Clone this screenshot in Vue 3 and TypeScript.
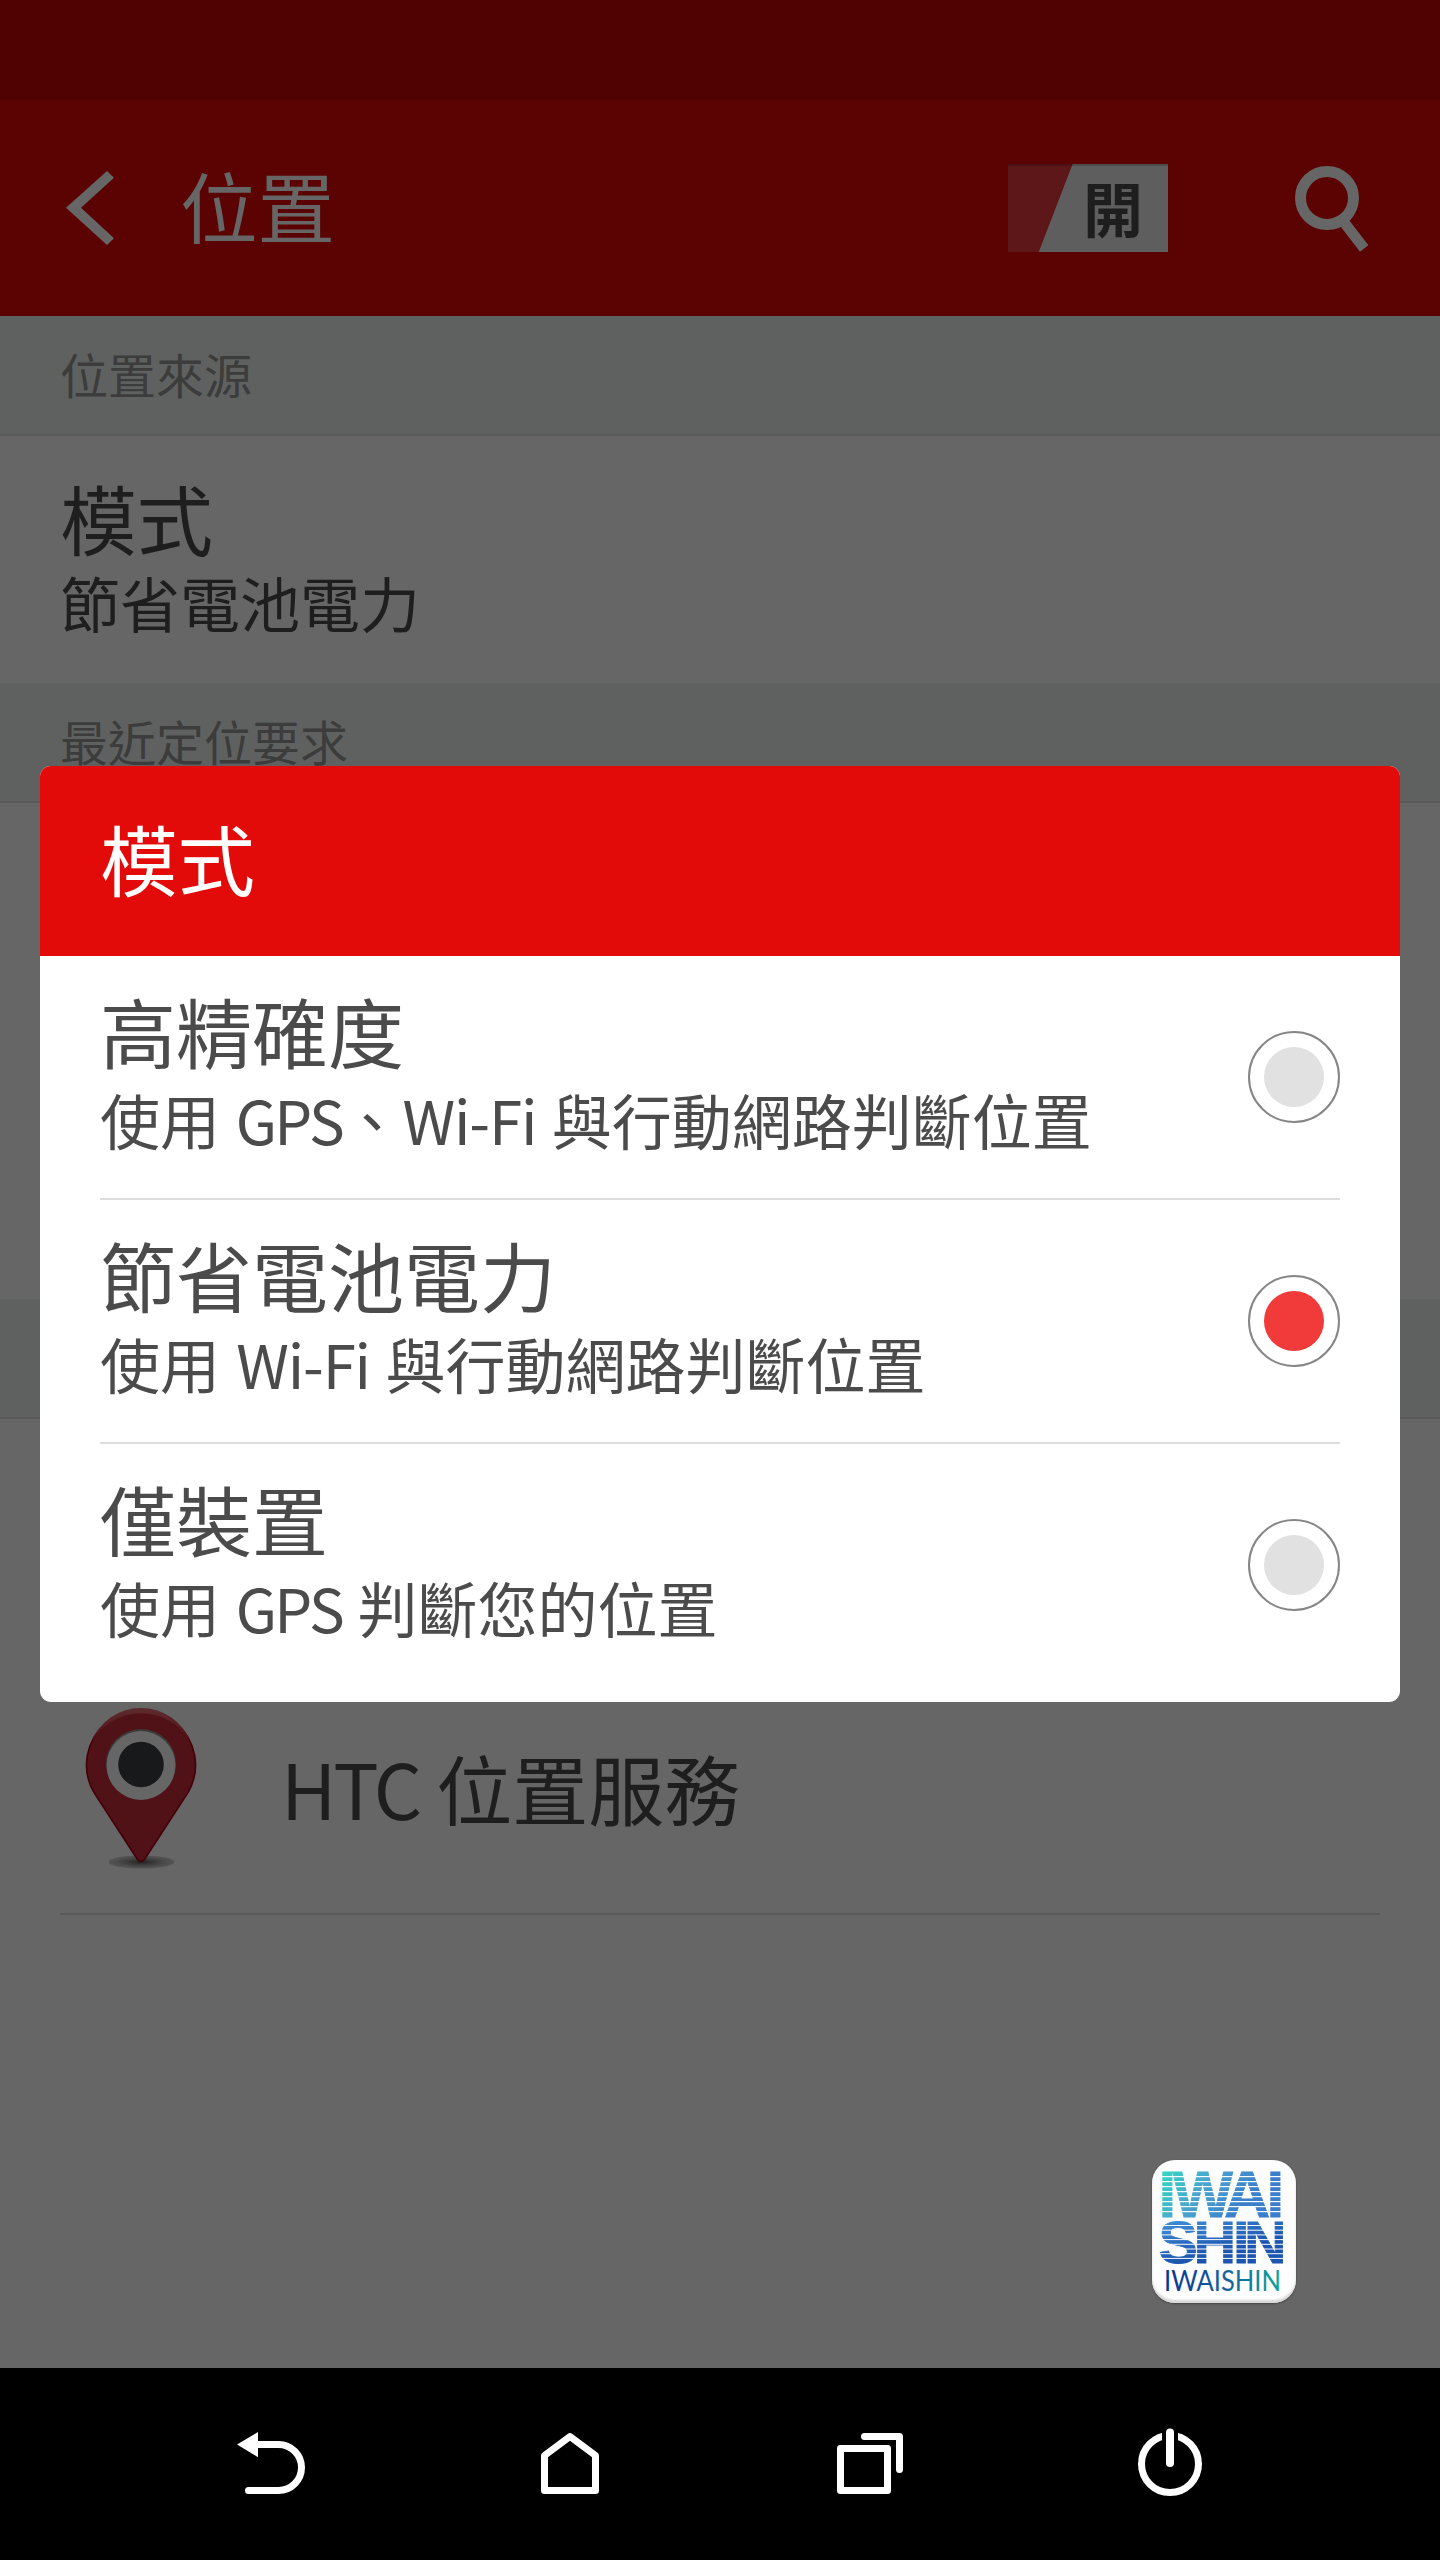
<script setup lang="ts">
import { ref } from 'vue'

interface Part {
  text: string
  kind?: 'gps' | 'wifi'
}

interface Mode {
  id: string
  title: string
  summary: Part[]
}

const modes: Mode[] = [
  {
    id: 'high',
    title: '高精確度',
    summary: [
      { text: '使用 ' },
      { text: 'GPS', kind: 'gps' },
      { text: '、' },
      { text: 'Wi-Fi', kind: 'wifi' },
      { text: ' 與行動網路判斷位置' },
    ],
  },
  {
    id: 'saving',
    title: '節省電池電力',
    summary: [
      { text: '使用 ' },
      { text: 'Wi-Fi', kind: 'wifi' },
      { text: ' 與行動網路判斷位置' },
    ],
  },
  {
    id: 'device',
    title: '僅裝置',
    summary: [
      { text: '使用 ' },
      { text: 'GPS', kind: 'gps' },
      { text: ' 判斷您的位置' },
    ],
  },
]

const selected = ref('saving')
</script>

<template>
  <div class="screen">
    <div class="status"></div>
    <header class="appbar">
      <svg class="back" width="60" height="80" viewBox="60 168 60 80">
        <path d="M66 207.8 107 171l7 6.8-33 30 33 30.4-7 6.8z" fill="#666" />
      </svg>
      <h1 class="bar-title">位置</h1>
      <div class="toggle"><span>開</span></div>
      <svg class="search" width="90" height="90" viewBox="1290 163 90 90" fill="none" stroke="#666">
        <circle cx="1327" cy="198" r="26.5" stroke-width="11" />
        <path d="M1344 222.3 1364.2 248.6" stroke-width="10.6" />
      </svg>
    </header>

    <main class="content">
      <div class="section">位置來源</div>
      <div class="item">
        <div class="item-title">模式</div>
        <div class="item-sub">節省電池電力</div>
      </div>
      <div class="section">最近定位要求</div>
      <div class="recent"></div>
      <div class="section"></div>
      <div class="spacer"></div>
      <div class="service">
        <svg class="pin" width="140" height="180" viewBox="71 1700 140 180">
          <defs>
            <radialGradient id="ground">
              <stop offset="0" stop-color="#222" />
              <stop offset=".45" stop-color="#3d3d3d" />
              <stop offset=".75" stop-color="#4c4c4c" />
              <stop offset="1" stop-color="#555" />
            </radialGradient>
            <linearGradient id="gloss" x1="0" y1="0" x2="0" y2="1">
              <stop offset="0" stop-color="#5c2a2e" />
              <stop offset="1" stop-color="#541419" />
            </linearGradient>
          </defs>
          <ellipse cx="141.5" cy="1862" rx="33" ry="6.6" fill="url(#ground)" />
          <path
            d="M137.5 1859.5 94 1792.5A54.5 54.5 0 1 1 188 1792.5L144.5 1859.5Q141 1863.5 137.5 1859.5z"
            fill="#511217"
            stroke="#440008"
            stroke-width="1.6"
          />
          <path d="M91.5 1742A53 53 0 0 1 190.5 1742A57 57 0 0 0 91.5 1742z" fill="url(#gloss)" />
          <circle cx="141" cy="1764" r="35" fill="#3c3c3c" />
          <circle cx="141" cy="1765.5" r="34.4" fill="#666" />
          <circle cx="141" cy="1764.5" r="22.8" fill="#18191b" />
        </svg>
        <div class="service-name"><span class="htc">HTC</span> 位置服務</div>
      </div>
    </main>

    <div class="overlay">
      <section class="dialog">
        <h2 class="dialog-title">模式</h2>
        <div v-for="m in modes" :key="m.id" class="option" @click="selected = m.id">
          <div class="option-text">
            <div class="option-title">{{ m.title }}</div>
            <div class="option-sub"><span v-for="(p, i) in m.summary" :key="i" :class="p.kind">{{ p.text }}</span></div>
          </div>
          <div class="radio" :class="{ on: selected === m.id }"></div>
        </div>
      </section>
    </div>

    <div class="badge">
      <svg width="144" height="144" viewBox="0 0 144 144">
        <defs>
          <linearGradient id="g1" gradientUnits="userSpaceOnUse" x1="10" y1="12" x2="80" y2="62">
            <stop offset="0" stop-color="#33d6c4" />
            <stop offset=".5" stop-color="#4aa3cf" />
            <stop offset="1" stop-color="#3b7ecb" />
          </linearGradient>
          <linearGradient id="g2" gradientUnits="userSpaceOnUse" x1="10" y1="61" x2="20" y2="104">
            <stop offset="0" stop-color="#3f8fd6" />
            <stop offset="1" stop-color="#1c55b0" />
          </linearGradient>
          <linearGradient id="g3" x1="0" y1="0" x2="1" y2="0">
            <stop offset="0" stop-color="#053292" />
            <stop offset=".55" stop-color="#1464a0" />
            <stop offset="1" stop-color="#08a59b" />
          </linearGradient>
        </defs>
        <g class="logo">
          <text x="6.4 20.5 72 114.5" y="57" font-size="64" fill="url(#g1)" stroke="url(#g1)">IWAI</text>
          <text x="6.5 41.5 81 92" y="103" font-size="59" fill="url(#g2)" stroke="url(#g2)">SHIN</text>
        </g>
        <g fill="#fdfdfd">
          <rect v-for="n in 8" :key="n" x="6" :y="11 + n * 5" width="130" height="1.2" />
          <rect v-for="n in 8" :key="'b' + n" x="6" :y="60.3 + n * 4.7" width="130" height="1" />
        </g>
        <text class="logo-sub" x="12" y="130.5" font-size="29" textLength="117" lengthAdjust="spacingAndGlyphs" fill="url(#g3)">IWAISHIN</text>
      </svg>
    </div>

    <nav class="nav">
      <button type="button">
        <svg width="80" height="80" viewBox="230 2424 80 80" fill="none" stroke="#fff" stroke-width="7" stroke-linecap="round">
          <path d="M237 2444.6 258 2432v25.2z" fill="#fff" stroke="none" />
          <path d="M257 2444.5H278.5a23 23 0 0 1 0 46H248.5" />
        </svg>
      </button>
      <button type="button">
        <svg width="80" height="80" viewBox="530 2424 80 80" fill="none" stroke="#fff" stroke-width="7" stroke-linejoin="round">
          <path d="M544.5 2455.5 570 2436.5 595.5 2455.5V2490.5H544.5z" />
        </svg>
      </button>
      <button type="button">
        <svg width="80" height="80" viewBox="830 2424 80 80" fill="none" stroke="#fff" stroke-width="7" stroke-linejoin="round" stroke-linecap="round">
          <path d="M840.5 2448.5H887.5V2490.5H840.5z" />
          <path d="M864.5 2436.5H899.5V2469.5" />
        </svg>
      </button>
      <button type="button">
        <svg width="80" height="80" viewBox="1130 2424 80 80" fill="none" stroke="#fff" stroke-linecap="round">
          <circle cx="1170" cy="2464" r="28.5" stroke-width="7" />
          <rect x="1162" y="2428" width="16" height="22" fill="#000" stroke="none" />
          <path d="M1170 2432.5V2463" stroke-width="8" />
        </svg>
      </button>
    </nav>
  </div>
</template>

<style>
body {
  margin: 0;
  background: #666;
}
</style>

<style scoped>
.screen {
  position: relative;
  display: flex;
  flex-direction: column;
  width: 1440px;
  height: 2560px;
  overflow: hidden;
  background: #666;
  color: #1e1e1e;
  font-family: 'Noto Sans CJK TC', sans-serif;
  font-weight: 400;
  white-space: nowrap;
}
h1,
h2 {
  margin: 0;
  font-weight: inherit;
}
.status {
  height: 100px;
  background: #500203;
}
.appbar {
  display: flex;
  align-items: center;
  height: 216px;
  padding: 0 60px;
  background: #5a0302;
  color: #666;
}
.back {
  margin-right: 60px;
}
.bar-title {
  flex: 1;
  font-size: 77.5px;
  line-height: 100px;
  padding-bottom: 8px;
}
.toggle {
  display: flex;
  align-items: center;
  justify-content: flex-end;
  box-sizing: border-box;
  width: 160px;
  height: 88px;
  padding: 0 25px 4px 0;
  background:
    linear-gradient(rgba(0, 0, 0, 0.18), rgba(0, 0, 0, 0.18)) top / 100% 2px no-repeat,
    linear-gradient(111.1deg, transparent 0 33.1%, #5e5e5e 33.6%),
    #5d1718;
  color: #1e1e1e;
  font-size: 60px;
  font-weight: 700;
}
.search {
  margin-left: 122px;
}
.content {
  flex: 1;
}
.section {
  box-sizing: border-box;
  height: 120px;
  padding: 0 60px 4px;
  border-bottom: 2px solid #595a59;
  background: #5f6160;
  color: #3c3c3c;
  font-size: 48px;
  line-height: 114px;
}
.item {
  box-sizing: border-box;
  height: 247px;
  padding: 33px 60px 0;
}
.item-title {
  font-size: 76.5px;
  line-height: 96px;
}
.item-sub {
  font-size: 60px;
  line-height: 73px;
}
.recent {
  height: 496px;
}
.spacer {
  height: 248px;
}
.service {
  display: flex;
  align-items: center;
  box-sizing: border-box;
  height: 248px;
  margin: 0 60px;
  border-bottom: 2px solid #595959;
}
.pin {
  margin: 0 70px 0 11px;
}
.service-name {
  font-size: 76px;
  line-height: 100px;
  padding-bottom: 6px;
}
.htc {
  letter-spacing: -3px;
}
.overlay {
  position: absolute;
  inset: 100px 0 192px;
  display: flex;
  align-items: center;
  justify-content: center;
}
.dialog {
  width: 1360px;
  height: 936px;
  overflow: hidden;
  border-radius: 11px;
  background: #fff;
  color: #4b4b4b;
}
.dialog-title {
  box-sizing: border-box;
  height: 190px;
  padding: 0 60px;
  background: #e30b09;
  color: #fff;
  font-size: 77.5px;
  line-height: 182px;
}
.option {
  display: flex;
  align-items: center;
  justify-content: space-between;
  box-sizing: border-box;
  height: 244px;
  margin: 0 60px;
  border-bottom: 2px solid #ddd;
}
.option:last-child {
  border-bottom-color: transparent;
}
.option-text {
  align-self: flex-start;
  padding-top: 24px;
}
.option-title {
  font-size: 76px;
  line-height: 100px;
}
.option-sub {
  font-size: 60px;
  line-height: 77px;
  white-space: pre;
  word-spacing: 2.2px;
}
.gps {
  letter-spacing: -2.7px;
}
.wifi {
  margin-left: 0.6px;
  letter-spacing: -1.2px;
}
.radio {
  display: flex;
  align-items: center;
  justify-content: center;
  box-sizing: border-box;
  width: 92px;
  height: 92px;
  border: 2px solid #868686;
  border-radius: 50%;
}
.radio::before {
  content: '';
  width: 60px;
  height: 60px;
  border-radius: 50%;
  background: #e1e1e1;
}
.radio.on::before {
  background: #f13a3a;
}
.badge {
  position: absolute;
  left: 1152px;
  top: 2160px;
  width: 144px;
  height: 143px;
  border-radius: 23px;
  background: #fdfdfd;
  box-shadow: 0 1px 2px #444, inset 0 -3px 2px #d8d8d8;
}
.logo {
  font-family: 'Liberation Sans', sans-serif;
  font-weight: 700;
  stroke-width: 0.8px;
}
.logo-sub {
  font-family: Lato, sans-serif;
  font-weight: 400;
}
.nav {
  display: flex;
  align-items: center;
  box-sizing: border-box;
  height: 192px;
  padding: 0 120px;
  background: #000;
}
.nav button {
  display: flex;
  justify-content: center;
  width: 300px;
  padding: 0;
  border: 0;
  background: none;
}
</style>
